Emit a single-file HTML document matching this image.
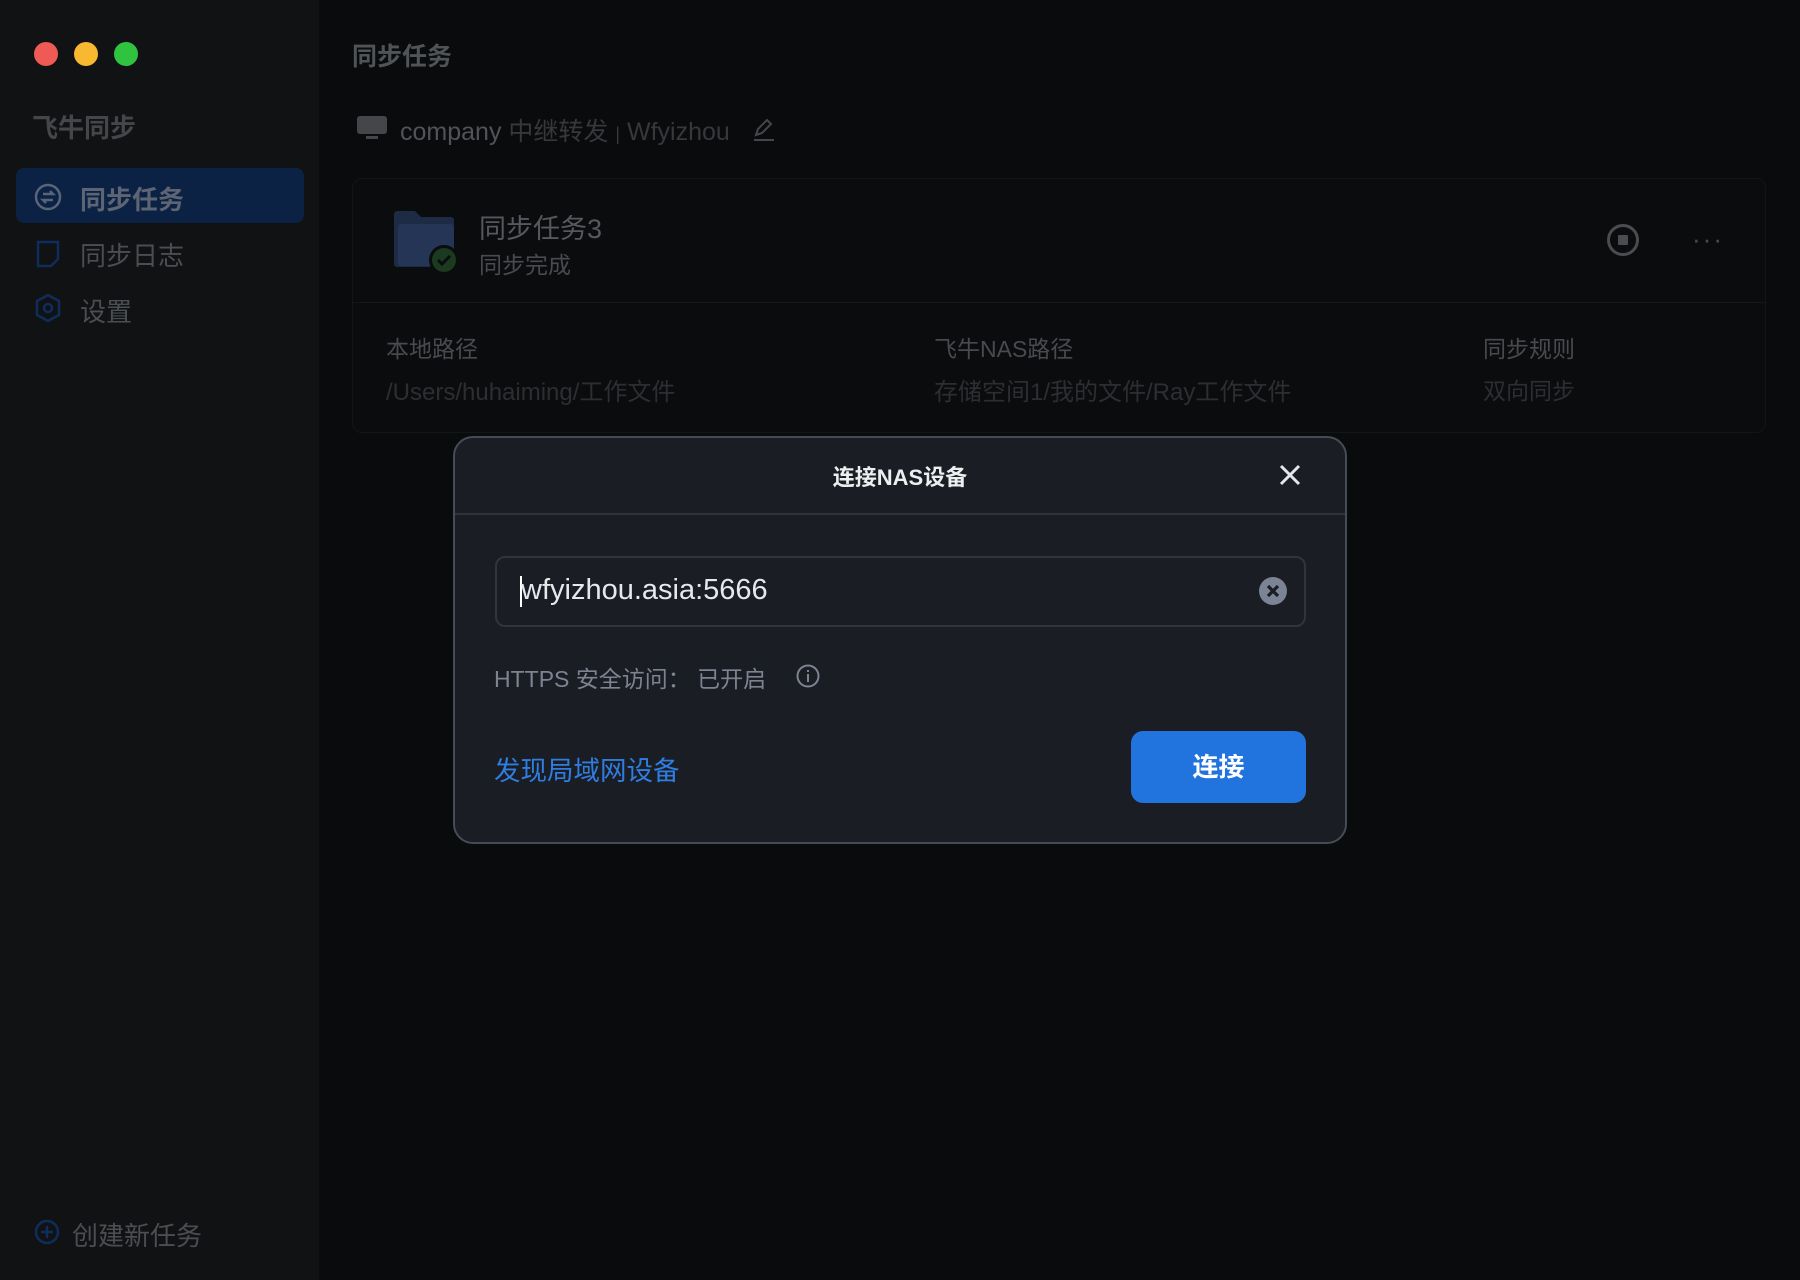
<!DOCTYPE html>
<html><head><meta charset="utf-8"><style>
*{margin:0;padding:0;box-sizing:border-box}
body{width:1800px;height:1280px;background:#0a0b0c;font-family:"Liberation Sans","Noto Sans CJK SC",sans-serif;position:relative;overflow:hidden;color:#6d7075}
.a{position:absolute;white-space:nowrap}
.side{position:absolute;left:0;top:0;width:319px;height:1280px;background:#111214}
.dot{position:absolute;top:42px;width:24px;height:24px;border-radius:50%}
</style></head><body>
<div class="side"></div>
<div class="dot" style="left:34px;background:#ef5a54"></div>
<div class="dot" style="left:74px;background:#f8b930"></div>
<div class="dot" style="left:114px;background:#2fc340"></div>
<div class="a" style="left:32px;top:108px;font-size:26px;font-weight:bold;color:#44464a">飞牛同步</div>
<div class="a" style="left:16px;top:168px;width:288px;height:55px;background:#0b2244;border-radius:8px"></div>
<svg class="a" style="left:34px;top:183px" width="28" height="28" viewBox="0 0 28 28" fill="none" stroke="#5a6478" stroke-width="2.5"><circle cx="14" cy="14" r="12"/><path d="M9 11h10l-3-3M19 17H9l3 3"/></svg>
<div class="a" style="left:80px;top:180px;font-size:26px;font-weight:bold;color:#5d6473">同步任务</div>
<svg class="a" style="left:36px;top:240px" width="24" height="28" viewBox="0 0 24 28" fill="none" stroke="#0f2d5c" stroke-width="2.5"><path d="M2 2h20v17l-7 7H2z"/></svg>
<div class="a" style="left:80px;top:236px;font-size:26px;color:#4a4d52">同步日志</div>
<svg class="a" style="left:34px;top:293px" width="28" height="30" viewBox="0 0 28 30" fill="none" stroke="#0f2d5c" stroke-width="2.5"><path d="M14 2l11 6v14l-11 6-11-6V8z"/><circle cx="14" cy="15" r="4"/></svg>
<div class="a" style="left:80px;top:292px;font-size:26px;color:#4a4d52">设置</div>
<svg class="a" style="left:34px;top:1219px" width="26" height="26" viewBox="0 0 26 26" fill="none" stroke="#0f2d5c" stroke-width="2.5"><circle cx="13" cy="13" r="11"/><path d="M13 7v12M7 13h12"/></svg>
<div class="a" style="left:72px;top:1216px;font-size:26px;color:#4a4d52">创建新任务</div>

<div class="a" style="left:352px;top:37px;font-size:25px;font-weight:bold;color:#505358">同步任务</div>
<svg class="a" style="left:357px;top:116px" width="30" height="24" viewBox="0 0 30 24"><rect x="0" y="0" width="30" height="18" rx="3" fill="#44464a"/><rect x="9" y="20" width="12" height="3" fill="#44464a"/></svg>
<div class="a" style="left:400px;top:112px;font-size:25px;color:#505358">company <span style="color:#36383c">中继转发 <span style="font-size:18px">|</span> Wfyizhou</span></div>
<svg class="a" style="left:752px;top:116px" width="24" height="26" viewBox="0 0 24 26" fill="none" stroke="#44464a" stroke-width="2"><path d="M4 19l2-6L15 4l4 4-9 9z M2 24h20"/></svg>

<div class="a" style="left:352px;top:178px;width:1414px;height:255px;border:1px solid #141517;border-radius:10px;background:#0b0c0d"></div>
<div class="a" style="left:352px;top:302px;width:1414px;height:1px;background:#16171a"></div>
<svg class="a" style="left:394px;top:210px" width="64" height="66" viewBox="0 0 64 66"><path d="M0 4a3 3 0 013-3h18l6 6h30a3 3 0 013 3v44a3 3 0 01-3 3H3a3 3 0 01-3-3z" fill="#1d2b45"/><rect x="4" y="14" width="56" height="42" rx="3" fill="#243555"/><circle cx="50" cy="50" r="15" fill="#0b0c0d"/><circle cx="50" cy="50" r="12" fill="#1c3a1f"/><path d="M44 50l4 4 8-8" fill="none" stroke="#0b0c0d" stroke-width="3"/></svg>
<div class="a" style="left:479px;top:207px;font-size:27px;color:#55585d">同步任务3</div>
<div class="a" style="left:479px;top:246px;font-size:23px;color:#474a4f">同步完成</div>
<svg class="a" style="left:1606px;top:223px" width="34" height="34" viewBox="0 0 34 34"><circle cx="17" cy="17" r="14.5" fill="none" stroke="#4a4c50" stroke-width="3"/><rect x="12" y="12" width="10" height="10" rx="1" fill="#4a4c50"/></svg>
<div class="a" style="left:1692px;top:224px;font-size:26px;color:#4a4c50;letter-spacing:2px">···</div>
<div class="a" style="left:386px;top:330px;font-size:23px;color:#474a4f">本地路径</div>
<div class="a" style="left:386px;top:372px;font-size:24px;color:#2c2e32">/Users/huhaiming/工作文件</div>
<div class="a" style="left:934px;top:330px;font-size:23px;color:#474a4f">飞牛NAS路径</div>
<div class="a" style="left:934px;top:372px;font-size:24px;color:#2c2e32">存储空间1/我的文件/Ray工作文件</div>
<div class="a" style="left:1483px;top:330px;font-size:23px;color:#474a4f">同步规则</div>
<div class="a" style="left:1483px;top:372px;font-size:23px;color:#2c2e32">双向同步</div>

<div class="a" style="left:453px;top:436px;width:894px;height:408px;background:#1a1d24;border:2px solid #464b55;border-radius:20px"></div>
<div class="a" style="left:455px;top:513px;width:890px;height:2px;background:#2f333b"></div>
<div class="a" style="left:453px;top:460px;width:894px;text-align:center;font-size:22px;font-weight:bold;color:#eceef0">连接NAS设备</div>
<svg class="a" style="left:1279px;top:464px" width="22" height="22" viewBox="0 0 22 22" stroke="#e4e6e9" stroke-width="3"><path d="M2 2l18 18M20 2L2 20"/></svg>
<div class="a" style="left:495px;top:556px;width:811px;height:71px;border:2px solid #30343c;border-radius:10px;background:#1a1d24"></div>
<div class="a" style="left:520px;top:576px;width:2px;height:31px;background:#fff"></div>
<div class="a" style="left:521px;top:574px;font-size:29px;color:#e6e8eb">wfyizhou.asia:5666</div>
<svg class="a" style="left:1259px;top:577px" width="28" height="28" viewBox="0 0 28 28"><circle cx="14" cy="14" r="14" fill="#7b8495"/><path d="M9 9l10 10M19 9L9 19" stroke="#1a1d24" stroke-width="3.2"/></svg>
<div class="a" style="left:494px;top:660px;font-size:23px;color:#7d8491">HTTPS 安全访问：&nbsp;已开启</div>
<svg class="a" style="left:796px;top:664px" width="24" height="24" viewBox="0 0 24 24" fill="none" stroke="#7d8491" stroke-width="2"><circle cx="12" cy="12" r="10.5"/><path d="M12 10v8M12 6v2"/></svg>
<div class="a" style="left:494px;top:749px;font-size:26.5px;color:#2f7de0">发现局域网设备</div>
<div class="a" style="left:1131px;top:731px;width:175px;height:72px;background:#2174dd;border-radius:12px;color:#fff;font-size:26px;font-weight:bold;text-align:center;line-height:72px">连接</div>
</body></html>
